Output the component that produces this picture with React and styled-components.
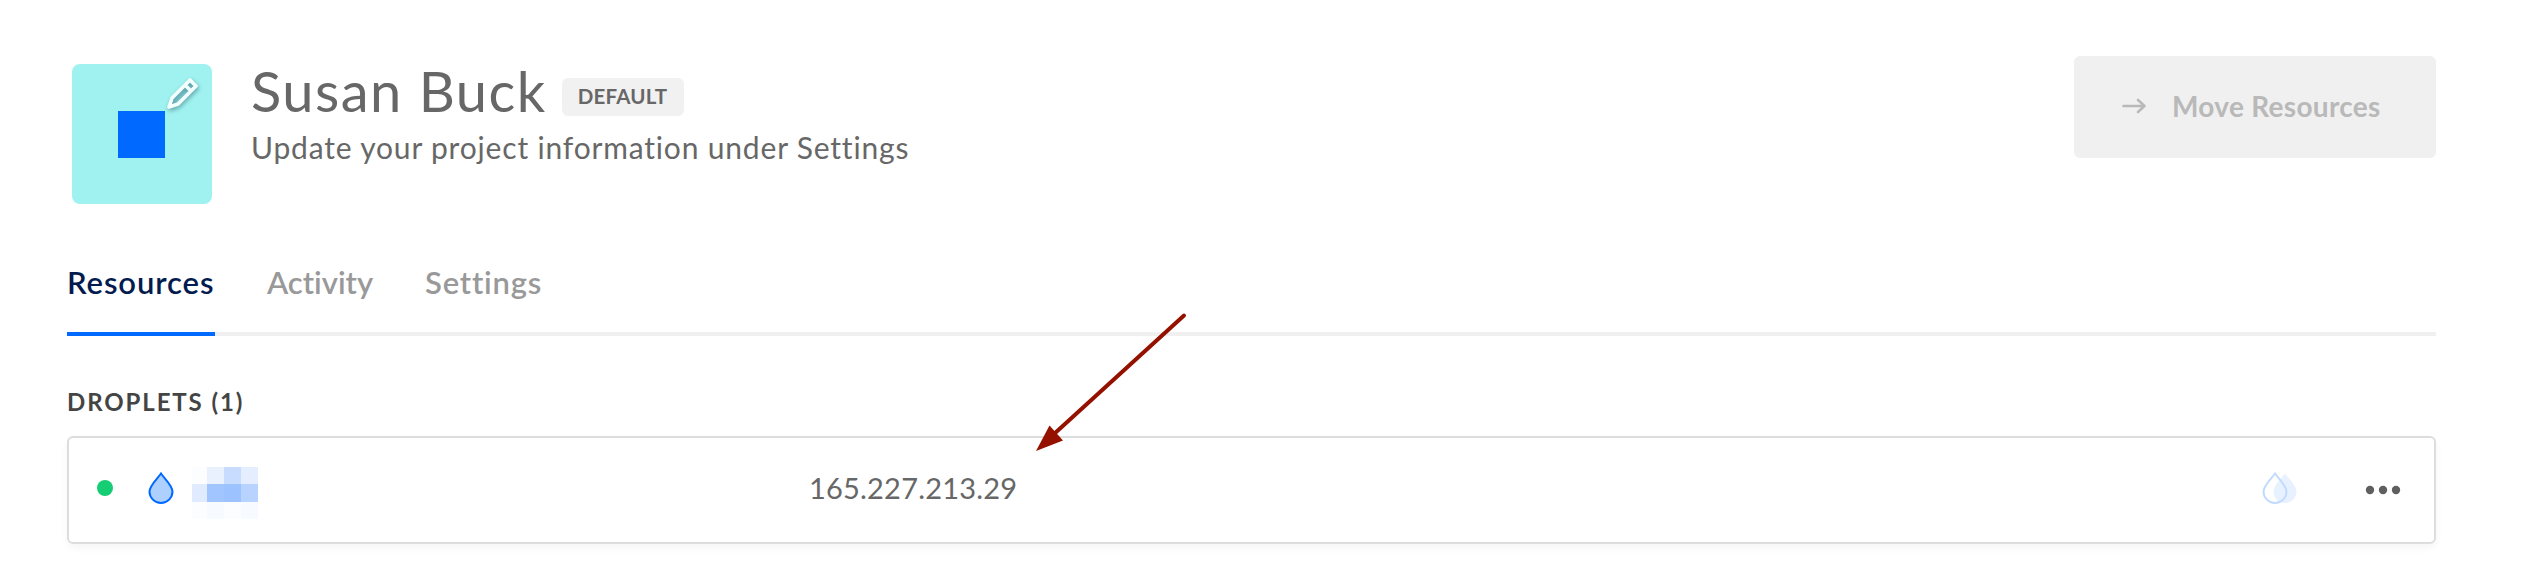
import React from "react";
import styled, { createGlobalStyle } from "styled-components";

const GlobalStyle = createGlobalStyle`
  * { box-sizing: border-box; }
  body { margin: 0; background: #fff; font-family: Lato, "Liberation Sans", sans-serif; color: #676767; font-variant-ligatures: none; }
  button { font-family: inherit; border: 0; background: none; padding: 0; font-variant-ligatures: none; }
`;

const Page = styled.main`
  position: relative;
  width: 2534px;
  height: 588px;
  padding: 56px 98px 0 67px;
  overflow: hidden;
`;

const Header = styled.header`
  display: flex;
  align-items: flex-start;
  height: 184px;
`;

const Avatar = styled.div`
  position: relative;
  display: grid;
  place-items: center;
  width: 140px;
  height: 140px;
  margin: 8px 39.5px 0 4.5px;
  border-radius: 8px;
  background: #a0f2f0;
`;

const AvatarMark = styled.div`
  width: 47px;
  height: 47px;
  background: #0069ff;
`;

const EditIcon = styled.svg`
  position: absolute;
  left: 92px;
  top: 11px;
  overflow: visible;
  filter: drop-shadow(1px 2px 2px rgba(0, 40, 60, 0.4));
`;

const Info = styled.div`
  flex: 1;
  white-space: nowrap;
`;

const TitleRow = styled.div`
  display: flex;
  align-items: flex-start;
  height: 71px;
`;

const Title = styled.h1`
  margin: 0;
  width: 310.5px;
  font-size: 56px;
  font-weight: 400;
  line-height: 69px;
  letter-spacing: 1.5px;
`;

const Badge = styled.span`
  width: 122px;
  height: 38px;
  margin-top: 22px;
  border-radius: 6px;
  background: #f1f1f1;
  font-size: 20.5px;
  font-weight: 700;
  line-height: 36px;
  letter-spacing: 0.2px;
  text-align: center;
`;

const Subtitle = styled.p`
  margin: 0;
  font-size: 30px;
  line-height: 40px;
  letter-spacing: 0.82px;
`;

const MoveButton = styled.button`
  display: flex;
  align-items: center;
  gap: 25px;
  width: 362.5px;
  height: 102px;
  padding: 0 0 2px 48.5px;
  border-radius: 6px;
  background: #f0f0f0;
  color: #b9b9b9;
  font-size: 28px;
  font-weight: 700;
  letter-spacing: 0.3px;
  white-space: nowrap;
`;

const Tabs = styled.nav`
  display: flex;
  gap: 52px;
  height: 96px;
  border-bottom: 4px solid #f0f0f0;
`;

const Tab = styled.button`
  width: ${(p) => p.$width}px;
  height: 96px;
  padding-bottom: 8px;
  border-bottom: 4px solid ${(p) => (p.$active ? "#0069ff" : "transparent")};
  color: ${(p) => (p.$active ? "#031b4e" : "#999")};
  font-size: 31px;
  font-weight: 600;
  letter-spacing: ${(p) => p.$tracking}px;
  text-align: left;
  white-space: nowrap;
`;

const SectionTitle = styled.h2`
  margin: 46px 0 14px;
  color: #444;
  font-size: 24px;
  font-weight: 700;
  line-height: 40px;
  letter-spacing: 1.9px;
`;

const Row = styled.div`
  display: flex;
  align-items: center;
  height: 108px;
  border: 2px solid #ddd;
  border-radius: 6px;
  box-shadow: 0 4px 8px rgba(0, 0, 0, 0.04);
`;

const Status = styled.span`
  width: 16px;
  height: 16px;
  margin: 0 34.5px 4px 28px;
  border-radius: 50%;
  background: #15cd72;
`;

const DropIcon = styled.svg`
  margin-bottom: 3px;
`;

const MaskedName = styled.div`
  display: grid;
  grid-template-columns: 15px 17px 17px 17px;
  grid-template-rows: 17px 18px 17px;
  margin: 6px 0 0 18px;
`;

const Cell = styled.i`
  background: ${(p) => p.$tone};
`;

const Address = styled.span`
  width: 1453px;
  margin-left: 551.5px;
  padding-bottom: 6px;
  font-size: 29px;
  letter-spacing: 0.2px;
`;

const MoreIcon = styled.svg`
  margin-left: 66.5px;
`;

const Annotation = styled.svg`
  position: absolute;
  left: 1030px;
  top: 305px;
`;

const DROP = "M13 1.5 C10 6 1.5 13.5 1.5 19.5 A11.5 11.5 0 0 0 24.5 19.5 C24.5 13.5 16 6 13 1.5 Z";
const TONES = [
  "#fcfdff", "#e9f1ff", "#c7dcff", "#e4eeff",
  "#e0ebff", "#a1c5ff", "#9cc2ff", "#b8d3ff",
  "#fcfdff", "#f7fbff", "#fcfdff", "#f7fbff",
];

export default function App() {
  return (
    <>
      <GlobalStyle />
      <Page>
        <Header>
          <Avatar>
            <AvatarMark />
            <EditIcon width="36" height="36" viewBox="0 0 36 36" fill="rgba(20,80,120,0.15)" stroke="#f4ffff" strokeWidth="3.6" strokeLinejoin="round">
              <path d="M26 5 L32 11 L14 29 L5 32 L8 23 Z M21 10 L27 16" />
            </EditIcon>
          </Avatar>
          <Info>
            <TitleRow>
              <Title>Susan Buck</Title>
              <Badge>DEFAULT</Badge>
            </TitleRow>
            <Subtitle>Update your project information under Settings</Subtitle>
          </Info>
          <MoveButton>
            <svg width="25" height="16" viewBox="0 0 25 16" fill="none" stroke="currentColor" strokeWidth="2.6" strokeLinecap="round" strokeLinejoin="round">
              <path d="M1.5 8 H22 M16 2 L22.5 8 L16 14" />
            </svg>
            Move Resources
          </MoveButton>
        </Header>
        <Tabs>
          <Tab $active $width={148} $tracking={0.9}>Resources</Tab>
          <Tab $width={106} $tracking={0}>Activity</Tab>
          <Tab $width={117} $tracking={0.8}>Settings</Tab>
        </Tabs>
        <SectionTitle>DROPLETS (1)</SectionTitle>
        <Row>
          <Status />
          <DropIcon width="26" height="33" viewBox="0 0 26 33">
            <path d={DROP} fill="#add0ff" stroke="#0069ff" strokeWidth="2" />
          </DropIcon>
          <MaskedName>{TONES.map((tone, i) => <Cell key={i} $tone={tone} />)}</MaskedName>
          <Address>165.227.213.29</Address>
          <DropIcon width="36" height="33" viewBox="0 0 36 33">
            <path d={DROP} transform="translate(10 0)" fill="#e8f1ff" />
            <path d={DROP} fill="none" stroke="#c1dbff" strokeWidth="2" />
          </DropIcon>
          <MoreIcon width="36" height="10" viewBox="0 0 36 10" fill="#5f5f5f">
            <circle cx="5" cy="5" r="4.2" />
            <circle cx="18" cy="5" r="4.2" />
            <circle cx="31" cy="5" r="4.2" />
          </MoreIcon>
        </Row>
        <Annotation width="160" height="150" viewBox="1030 305 160 150">
          <path d="M1184 315.5 L1054 434" stroke="#941100" strokeWidth="4" strokeLinecap="round" />
          <path d="M1036 451 L1049.5 425.5 L1063 440.5 Z" fill="#941100" />
        </Annotation>
      </Page>
    </>
  );
}
